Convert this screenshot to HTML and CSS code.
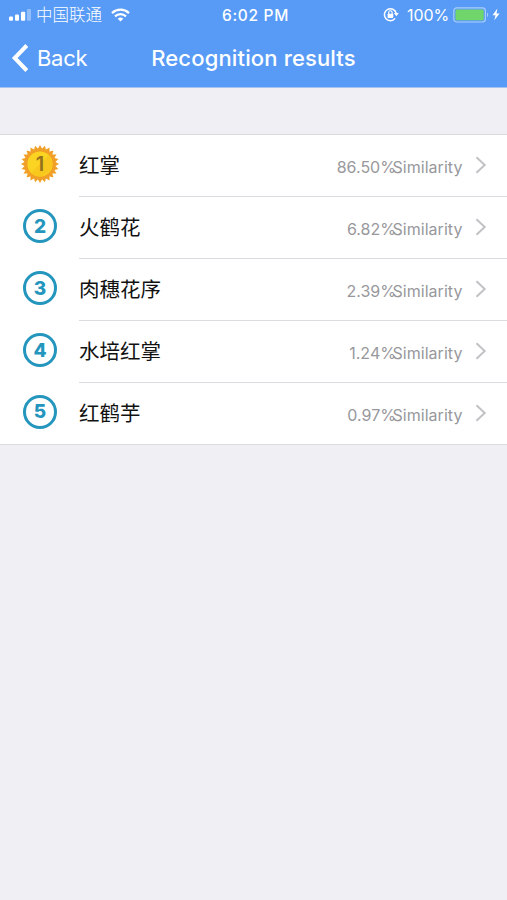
FILE: index.html
```html
<!DOCTYPE html>
<html lang="en">
<head>
<meta charset="utf-8">
<title>Recognition results</title>
<link rel="stylesheet" href="styles.css">
</head>
<body>
<svg class="defs" width="0" height="0">
  <symbol id="chevron" viewBox="0 0 12 18"><path d="M1.5 1.2 9.7 9l-8.2 7.8" fill="none" stroke="#c2c2c6" stroke-width="2"/></symbol>
</svg>
<header class="header">
  <div class="status">
    <div class="status-left">
      <svg width="22" height="12" viewBox="0 0 22 12" fill="#fff"><rect x="0" y="7.6" width="4" height="4.2" rx="1"/><rect x="6" y="5.4" width="4" height="6.4" rx="1"/><rect x="12" y="2.8" width="4.2" height="9" rx="1"/><rect x="18" y="0" width="4" height="11.8" rx="1" opacity=".35"/></svg>
      <span class="carrier">中国联通</span>
      <svg class="wifi" width="19" height="14" viewBox="0 0 19 14" fill="none" stroke="#fff" stroke-width="2.3"><path d="M1 5.1a12.3 12.3 0 0 1 17 0"/><path d="M4 8.4a8 8 0 0 1 11 0"/><path d="M6.7 10.7a4.2 4.2 0 0 1 5.6 0L9.5 13.5z" fill="#fff" stroke="none"/></svg>
    </div>
    <span class="time">6:02 PM</span>
    <div class="status-right">
      <svg width="16" height="15" viewBox="0 0 16 15"><path d="M12.1 11.4A6 6 0 1 1 13.2 6.2" fill="none" stroke="#fff" stroke-width="1.5"/><path d="M10.9 6h4.9l-2.4 3.2z" fill="#fff"/><rect x="4.6" y="6.7" width="5.6" height="4.2" rx=".5" fill="#fff"/><path d="M5.7 7V5.4a1.7 1.7 0 0 1 3.4 0V7" fill="none" stroke="#fff" stroke-width="1.1"/></svg>
      <span class="percent">100%</span>
      <svg class="battery" width="36" height="16" viewBox="0 0 36 16"><rect x=".8" y=".8" width="31.6" height="14.2" rx="3" fill="none" stroke="#a9cdfb" stroke-width="1.2"/><rect x="2.5" y="2.6" width="28.2" height="10.6" rx="1.3" fill="#70d66b"/><path d="M34 5.3q2.3 2.5 0 5z" fill="#a9cdfb"/></svg>
      <svg width="8" height="13" viewBox="0 0 8 13"><path d="M5.4.6.5 7.2h3L2.3 12.3 7.6 5.4H4.5z" fill="#fff"/></svg>
    </div>
  </div>
  <nav class="nav">
    <div class="back">
      <svg width="18" height="30" viewBox="0 0 18 30"><path d="M15.8 2.5 3.7 15l12.1 12.5" fill="none" stroke="#fff" stroke-width="4"/></svg>
      <span>Back</span>
    </div>
    <h1 class="title">Recognition results</h1>
  </nav>
</header>
<main class="results">
  <div class="row">
    <svg class="badge" width="38" height="38" viewBox="-19 -19 38 38">
      <g fill="#f0a026"><path id="t" d="M0-19 16.45 9.5h-32.9z"/><use href="#t" transform="rotate(15)"/><use href="#t" transform="rotate(30)"/><use href="#t" transform="rotate(45)"/><use href="#t" transform="rotate(60)"/><use href="#t" transform="rotate(75)"/><use href="#t" transform="rotate(90)"/><use href="#t" transform="rotate(105)"/></g>
      <circle r="12.6" fill="#fbd322"/><path d="M-8.9 8.9A12.6 12.6 0 0 0 8.9-8.9z" fill="#f8c81f"/>
      <text y="7" text-anchor="middle" class="medal-number">1</text>
    </svg>
    <div class="content"><span class="name">红掌</span><span class="score"><span>86.50%</span><span class="label">Similarity</span></span><svg class="chevron"><use href="#chevron"/></svg></div>
  </div>
  <div class="row"><span class="badge ring">2</span><div class="content"><span class="name">火鹤花</span><span class="score"><span>6.82%</span><span class="label">Similarity</span></span><svg class="chevron"><use href="#chevron"/></svg></div></div>
  <div class="row"><span class="badge ring">3</span><div class="content"><span class="name">肉穗花序</span><span class="score"><span>2.39%</span><span class="label">Similarity</span></span><svg class="chevron"><use href="#chevron"/></svg></div></div>
  <div class="row"><span class="badge ring">4</span><div class="content"><span class="name">水培红掌</span><span class="score"><span>1.24%</span><span class="label">Similarity</span></span><svg class="chevron"><use href="#chevron"/></svg></div></div>
  <div class="row"><span class="badge ring">5</span><div class="content"><span class="name">红鹤芋</span><span class="score"><span>0.97%</span><span class="label">Similarity</span></span><svg class="chevron"><use href="#chevron"/></svg></div></div>
</main>
</body>
</html>
```
FILE: styles.css
```css
* { box-sizing: border-box; }
body {
  margin: 0;
  min-height: 900px;
  background: #efeff4;
  font-family: Inter, "Noto Sans CJK SC", sans-serif;
  color: #111;
}
svg { display: block; flex: none; }
.defs { position: absolute; }
.header {
  height: 88px;
  background: #589bf6;
  border-bottom: 1px solid #a5c5f0;
  color: #fff;
}
.status {
  display: grid;
  grid-template-columns: 1fr auto 1fr;
  align-items: center;
  height: 29px;
  padding: 0 7px 0 9px;
}
.status-left, .status-right { display: flex; align-items: center; }
.status-right { justify-content: flex-end; }
.carrier { margin-left: 5px; font-size: 16.5px; line-height: 24px; font-weight: 300; }
.wifi { margin-left: 9px; }
.time { font-size: 15.5px; font-weight: 500; letter-spacing: 0.7px; margin-left: 2px; padding-top: 1px; }
.percent { margin: 0 4px 0 8px; font-size: 16px; letter-spacing: -0.1px; }
.battery { margin-right: 3px; }
.nav {
  display: grid;
  grid-template-columns: 1fr auto 1fr;
  align-items: center;
  height: 58px;
  padding-left: 11px;
  padding-right: 11px;
}
.back { display: flex; align-items: center; font-size: 22px; letter-spacing: -0.3px; }
.back span { margin-left: 8px; }
.title { margin: 0; font-size: 22px; font-weight: 550; letter-spacing: 0.15px; white-space: nowrap; }
.results {
  margin-top: 46px;
  background: #fff;
  border-top: 1px solid #dadade;
  border-bottom: 1px solid #dadade;
}
.row { display: flex; align-items: center; height: 62px; padding-left: 21px; }
.row:last-child { height: 61px; }
.badge { flex: none; width: 38px; height: 38px; margin-bottom: 4px; }
.ring {
  display: flex;
  align-items: center;
  justify-content: center;
  width: 34px;
  height: 34px;
  margin: 0 2px 4px;
  border: 3px solid #2496bd;
  border-radius: 50%;
  color: #2496bd;
  font-size: 19px;
  font-weight: 800;
  line-height: 1;
}
.medal-number { font-size: 20px; font-weight: 600; fill: #93701c; }
.content {
  flex: 1;
  display: flex;
  align-items: center;
  height: 100%;
  margin-left: 20px;
  padding-right: 20px;
  border-bottom: 1px solid #dcdce0;
}
.row:last-child .content { border-bottom: 0; }
.name { flex: 1; font-size: 20.5px; line-height: 30px; padding-top: 1px; }
.score { display: flex; margin-top: 3px; font-size: 16px; color: #98989c; }
.label { margin-left: -3.5px; letter-spacing: 0.05px; }
.chevron { width: 12px; height: 18px; margin: 0 0 2px 12.5px; }
```
